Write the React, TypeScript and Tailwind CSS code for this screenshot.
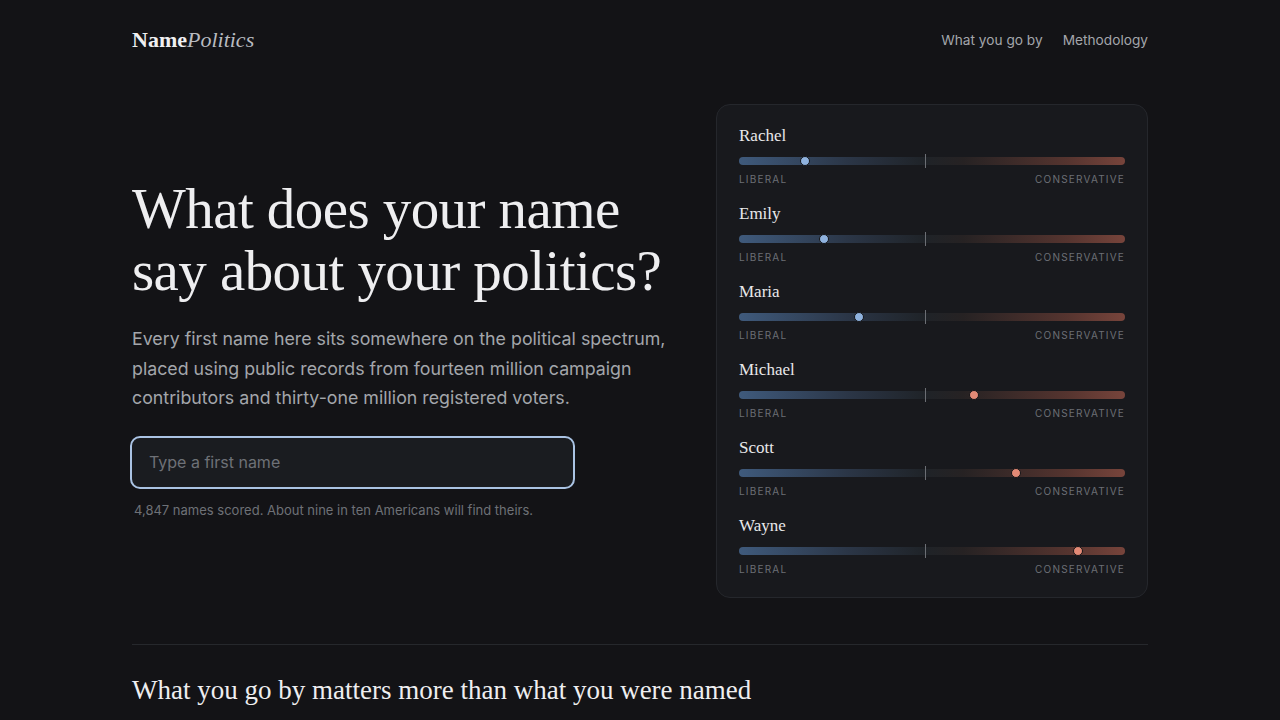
import React from "react";

interface NameScore {
  name: string;
  score: number; // 0 = liberal end, 1 = conservative end
}

const samples: NameScore[] = [
  { name: "Rachel", score: 0.171 },
  { name: "Emily", score: 0.22 },
  { name: "Maria", score: 0.31 },
  { name: "Michael", score: 0.609 },
  { name: "Scott", score: 0.718 },
  { name: "Wayne", score: 0.878 },
];

const serif = "font-['Liberation_Serif','DejaVu_Serif',serif]";
const sans = "font-['Inter','Liberation_Sans',sans-serif]";

const SpectrumRow: React.FC<{ item: NameScore }> = ({ item }) => {
  const isLeft = item.score < 0.5;
  return (
    <div className="flex flex-col">
      <div className={`${serif} text-[17px] leading-[22px] text-[#e8e8ea]`}>
        {item.name}
      </div>
      <div className="relative mt-[10px] h-[8px] rounded-full bg-[linear-gradient(90deg,#3f5a7c_0%,#2b3647_28%,#1f2328_48%,#262223_58%,#55342f_85%,#77443b_100%)]">
        {/* midpoint tick */}
        <div className="absolute left-[48.2%] top-[-3px] h-[14px] w-px bg-[#6b6e74]" />
        <div
          className={`absolute top-1/2 h-[10px] w-[10px] -translate-x-1/2 -translate-y-1/2 rounded-full border-[1.5px] border-[#141518] ${
            isLeft ? "bg-[#8fb2de]" : "bg-[#e38a76]"
          }`}
          style={{ left: `${item.score * 100}%` }}
        />
      </div>
      <div
        className={`${sans} mt-[8px] flex justify-between text-[10px] leading-[12px] tracking-[0.12em] text-[#6c6f75]`}
      >
        <span>LIBERAL</span>
        <span>CONSERVATIVE</span>
      </div>
    </div>
  );
};

const App: React.FC = () => {
  return (
    <div className={`h-[720px] overflow-hidden bg-[#131316] ${sans}`}>
      <div className="mx-auto w-[1016px]">
        {/* Header */}
        <header className="flex h-[80px] items-center justify-between">
          <div className={`${serif} text-[22px] leading-none text-[#f0f0f2]`}>
            <span className="font-bold">Name</span>
            <span className="italic text-[#b9bbc0]">Politics</span>
          </div>
          <nav className="flex gap-[20px] text-[13.7px] text-[#a3a6ab]">
            <span>What you go by</span>
            <span>Methodology</span>
          </nav>
        </header>

        {/* Hero */}
        <section className="flex justify-between pt-[24px]">
          <div className="w-[540px] pt-[74px]">
            <h1
              className={`${serif} text-[57px] leading-[62px] tracking-[-0.01em] text-[#eeeef0]`}
            >
              What does your name say about your politics?
            </h1>
            <p className="mt-[22px] text-[17.8px] leading-[29.5px] text-[#a3a6ab]">
              Every first name here sits somewhere on the political spectrum,
              placed using public records from fourteen million campaign
              contributors and thirty-one million registered voters.
            </p>
            <div className="-ml-[2px] mt-[23px] flex h-[53px] w-[445px] items-center rounded-[10px] border-2 border-[#aac3e3] bg-[#1a1c20] px-[17px] text-[16px] text-[#6e7177]">
              Type a first name
            </div>
            <p className="mt-[12px] pl-[2px] text-[13px] text-[#6e7176]">
              4,847 names scored. About nine in ten Americans will find theirs.
            </p>
          </div>

          <div className="flex w-[432px] flex-col gap-[18px] rounded-[14px] border border-[#25272c] bg-[#18191d] px-[22px] pb-[22px] pt-[20px]">
            {samples.map((s) => (
              <SpectrumRow key={s.name} item={s} />
            ))}
          </div>
        </section>

        <div className="mt-[46px] h-px bg-[#26282c]" />

        <h2
          className={`${serif} mt-[29px] text-[27px] leading-[32px] text-[#eeeef0]`}
        >
          What you go by matters more than what you were named
        </h2>
      </div>
    </div>
  );
};

export default App;
